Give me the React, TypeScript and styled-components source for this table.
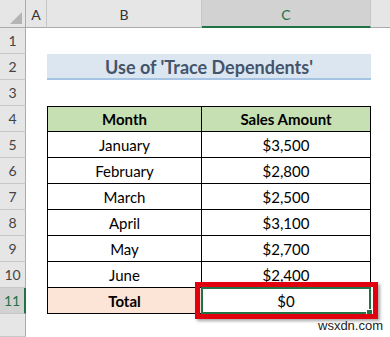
import React from "react";
import styled, { createGlobalStyle } from "styled-components";

const Global = createGlobalStyle`
  html, body { margin: 0; padding: 0; background: #fff; }
  body { font-family: Lato, "Liberation Sans", sans-serif; overflow: hidden; }
`;

const Sheet = styled.div`
  position: relative;
  width: 390px;
  height: 337px;
  overflow: hidden;
  display: grid;
  grid-template-columns: 26px 21px 155px 169px 19px;
  grid-template-rows: 28px repeat(11, 26px) 23px;
  background: #fff;
`;

const Corner = styled.div`
  background: #e6e6e6;
  border-right: 1px solid #ababab;
  border-bottom: 1px solid #ababab;
  position: relative;
  &::after {
    content: "";
    position: absolute;
    right: 3px;
    bottom: 3px;
    width: 0;
    height: 0;
    border-left: 12px solid transparent;
    border-bottom: 12px solid #b4b4b4;
  }
`;

const ColHead = styled.div<{ $sel?: boolean; $last?: boolean }>`
  background: ${(p) => (p.$sel ? "#d2d2d2" : "#e6e6e6")};
  border-right: ${(p) => (p.$last ? "none" : "1px solid #c6c6c6")};
  border-bottom: ${(p) => (p.$sel ? "2px solid #217346" : "1px solid #ababab")};
  display: flex;
  align-items: center;
  justify-content: center;
  padding-top: 2px;
  font-size: 14px;
  color: ${(p) => (p.$sel ? "#217346" : "#333")};
`;

const RowHead = styled.div<{ $sel?: boolean }>`
  background: ${(p) => (p.$sel ? "#d2d2d2" : "#e6e6e6")};
  border-right: ${(p) => (p.$sel ? "2px solid #217346" : "1px solid #ababab")};
  border-bottom: 1px solid #c8c8c8;
  display: flex;
  align-items: center;
  justify-content: center;
  font-size: 14px;
  color: ${(p) => (p.$sel ? "#217346" : "#444")};
`;

const Blank = styled.div``;

const TitleBand = styled.div`
  grid-column: 3 / span 2;
  background: #dce6f1;
  border-bottom: 2px solid #a6c3e4;
  display: flex;
  align-items: center;
  justify-content: center;
  font-weight: 700;
  font-size: 18px;
  color: #44546a;
  padding-top: 1px;
`;

const Cell = styled.div<{ $bg?: string; $bold?: boolean; $left?: boolean; $top?: boolean }>`
  background: ${(p) => p.$bg || "#fff"};
  border-right: 1px solid #000;
  border-bottom: 1px solid #000;
  border-left: ${(p) => (p.$left ? "1px solid #000" : "none")};
  border-top: ${(p) => (p.$top ? "1px solid #000" : "none")};
  display: flex;
  align-items: center;
  justify-content: center;
  font-size: 15px;
  font-weight: ${(p) => (p.$bold ? 700 : 400)};
  color: #000;
`;

const SelCell = styled(Cell)`
  position: relative;
  border: 2px solid #217346;
  margin: -1px 0 0 -1px;
  &::after {
    content: "";
    position: absolute;
    right: -4px;
    bottom: -4px;
    width: 5px;
    height: 5px;
    background: #217346;
    border: 1px solid #fff;
  }
`;

const RedBox = styled.div`
  position: absolute;
  left: 195px;
  top: 282px;
  width: 173px;
  height: 27px;
  border: 5px solid #e0000e;
  box-shadow: 2px 2px 3px rgba(0, 0, 0, 0.35);
  pointer-events: none;
`;

const Watermark = styled.div`
  position: absolute;
  left: 318px;
  top: 318px;
  font-family: "Liberation Sans", Arial, sans-serif;
  font-size: 13px;
  color: #222;
  white-space: nowrap;
`;

const data = [
  ["January", "$3,500"],
  ["February", "$2,800"],
  ["March", "$2,500"],
  ["April", "$3,100"],
  ["May", "$2,700"],
  ["June", "$2,400"],
];

export default function App() {
  return (
    <>
      <Global />
      <Sheet>
        <Corner />
        <ColHead>A</ColHead>
        <ColHead>B</ColHead>
        <ColHead $sel>C</ColHead>
        <ColHead $last />

        <RowHead>1</RowHead>
        <Blank /><Blank /><Blank /><Blank />

        <RowHead>2</RowHead>
        <Blank />
        <TitleBand>Use of 'Trace Dependents'</TitleBand>
        <Blank />

        <RowHead>3</RowHead>
        <Blank /><Blank /><Blank /><Blank />

        <RowHead>4</RowHead>
        <Blank />
        <Cell $bg="#c6e0b4" $bold $left $top>Month</Cell>
        <Cell $bg="#c6e0b4" $bold $top>Sales Amount</Cell>
        <Blank />

        {data.map(([m, v], i) => (
          <React.Fragment key={m}>
            <RowHead>{i + 5}</RowHead>
            <Blank />
            <Cell $left>{m}</Cell>
            <Cell>{v}</Cell>
            <Blank />
          </React.Fragment>
        ))}

        <RowHead $sel>11</RowHead>
        <Blank />
        <Cell $bg="#fce4d6" $bold $left>Total</Cell>
        <SelCell>$0</SelCell>
        <Blank />

        <RowHead />
        <Blank /><Blank /><Blank /><Blank />

        <RedBox />
        <Watermark>wsxdn.com</Watermark>
      </Sheet>
    </>
  );
}
